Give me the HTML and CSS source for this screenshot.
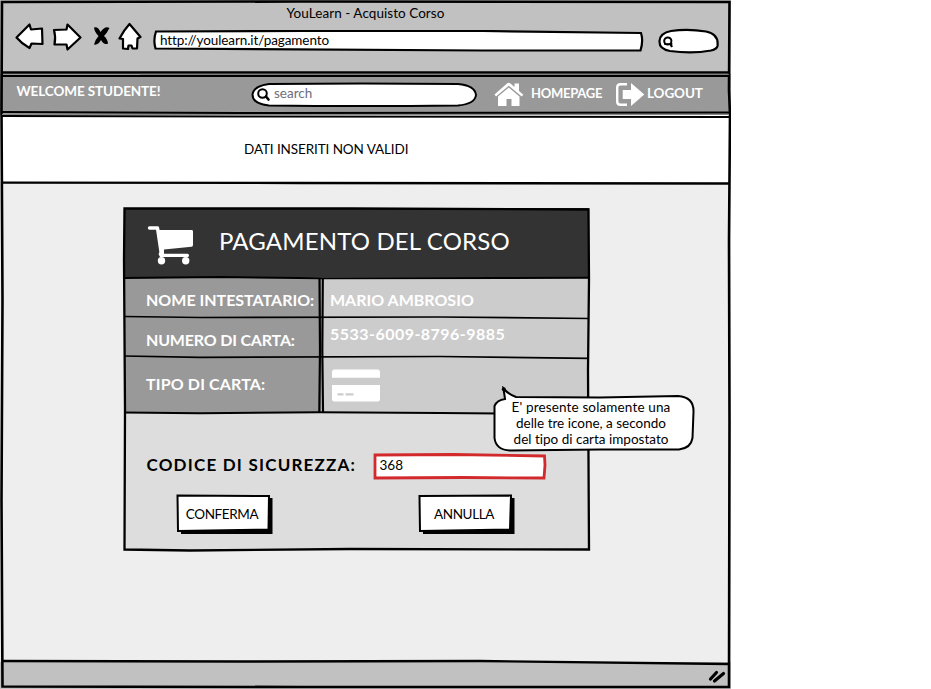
FILE: index.html
```html
<!DOCTYPE html>
<html lang="it">
<head>
<meta charset="utf-8">
<title>YouLearn - Acquisto Corso</title>
<link rel="stylesheet" href="styles.css">
</head>
<body>
<div class="window">
  <header class="chrome">
    <div class="title"><span class="t-title">YouLearn - Acquisto Corso</span></div>
    <div class="toolbar">
      <svg class="tools" width="128" height="32" viewBox="14 21 128 32">
        <g fill="#fff" stroke="#000" stroke-width="2.2" stroke-linejoin="round">
          <path d="M16.500 37.500 L29.500 24.500 L31 29.500 L42 28.500 L42.500 44 L31.500 43.500 L29.500 48 Q22 44 16.500 37.500Z"/>
          <path d="M54 30 L66.500 29.500 L67.500 24.500 L80.500 37.500 L67.500 49.500 L66.500 44.500 L54.500 44.500 Q56 37 54 30Z"/>
          <path d="M129.500 24 L140.500 37 L137.500 38.500 L137 48.500 L132.500 48.500 L131.500 45.500 L128.500 45.500 L128 49 L123 48.500 L123 39 L119.500 38.500 Q124 30 129.500 24Z"/>
        </g>
        <path d="M94 27.500 Q98 26 100.500 32 Q105 25.500 109.500 28 Q107 33 104 36 Q107.500 39 108 43.500 Q104 45.500 101 40 Q98 45.500 94 44.500 Q95 40 98.500 36 Q94.500 32 94 27.500Z"/>
      </svg>
      <div class="address">
        <svg class="shape" viewBox="0 0 491 22"><path d="M3 1.500 L150 1 L330 1 L488 3 Q490.500 11 487.500 20.500 L330 20.500 L2.500 18.500 Q0 10 3 1.500Z" fill="#fff" stroke="#000" stroke-width="2.200"/></svg>
        <span class="t-url">http://youlearn.it/pagamento</span>
      </div>
      <svg class="quick" width="62" height="26" viewBox="657 28 62 26">
        <path d="M659.500 41 Q660 33 671 31 Q688 28.500 706 31.500 Q719 34 717.500 46 Q717 49 711 50.500 Q692 54 670 51 Q659 49 659.500 41Z" fill="#fff" stroke="#000" stroke-width="2.200"/>
        <path d="M671.500 43 L671 45 L672 47" fill="none" stroke="#000" stroke-width="2.200"/><circle cx="667.800" cy="41" r="3.600" fill="none" stroke="#000" stroke-width="2"/><path d="M664 44 L672 44.200" stroke="#000" stroke-width="1.500"/>
      </svg>
    </div>
  </header>

  <nav class="nav">
    <span class="t-welcome">WELCOME STUDENTE!</span>
    <div class="search">
      <svg class="shape" viewBox="0 0 226 25"><path d="M18 2 Q110 .8 207 2 Q224 3.500 225 13 Q224 22 207 23.500 Q110 24.500 18 23.500 Q1.500 22 1.500 12.500 Q2.500 4 18 2Z" fill="#fff" stroke="#000" stroke-width="2"/><circle cx="11.500" cy="11.500" r="4.300" fill="none" stroke="#000" stroke-width="2"/><path d="M15 14.500 L17.500 17.500" stroke="#000" stroke-width="2.600" stroke-linecap="round"/></svg>
      <span class="t-search">search</span>
    </div>
    <a class="link home"><svg width="30" height="26" viewBox="494 82 30 26" fill="#fff"><path d="M494.500 94.500 L507 83.500 Q508.800 82.200 510.500 83.500 L514.500 87 L514.500 83.500 L519 83.500 L519 91 L523.300 94.800 L521.700 96.600 L508.800 85.800 L496 96.600Z"/><path d="M508.800 87.600 L519.500 96.500 L519.500 106 L511.500 106 L511.500 99 L506.500 99 L506.500 106 L498 106 L498 96.500Z"/></svg><span class="t-home">HOMEPAGE</span></a>
    <a class="link logout"><svg width="30" height="26" viewBox="615 82 30 26" fill="#fff"><path d="M627 84.200 H620.500 Q617.200 84.200 617.200 87.500 V101.500 Q617.200 104.800 620.500 104.800 H627" fill="none" stroke="#fff" stroke-width="2.400"/><path d="M622.700 90 H631 V83 L644.300 94.500 L631 106 V99 H622.700Z"/></svg><span class="t-logout">LOGOUT</span></a>
  </nav>

  <div class="alert"><span class="t-alert">DATI INSERITI NON VALIDI</span></div>

  <main class="page">
    <section class="card">
      <header class="card-head">
        <svg width="48" height="42" viewBox="147 225 48 42" fill="#fff"><path d="M149.500 228 H157.500 L161.500 255" fill="none" stroke="#fff" stroke-width="3.400" stroke-linecap="round" stroke-linejoin="round"/><path d="M157.500 230 H192 Q193 230 193 231.500 V245 Q193 246.500 191.500 246.700 L164 249.500 V253.800 H187.500 Q189 253.800 189 255.500 Q189 257 187.500 257 H160 L158.500 254 L161 250Z"/><circle cx="161.500" cy="260.800" r="3.700"/><circle cx="185.700" cy="260.800" r="3.700"/></svg>
        <span class="t-head">PAGAMENTO DEL CORSO</span>
      </header>
      <div class="rows">
        <div class="label"><span class="t-nome">NOME INTESTATARIO:</span></div>
        <div class="value"><span class="t-mario">MARIO AMBROSIO</span></div>
        <div class="label"><span class="t-numero">NUMERO DI CARTA:</span></div>
        <div class="value number"><span class="t-num">5533-6009-8796-9885</span></div>
        <div class="label"><span class="t-tipo">TIPO DI CARTA:</span></div>
        <div class="value"><svg width="50" height="34" viewBox="331 368 50 34" fill="#fff"><path d="M332 377.800 V372 Q332 369.500 334.500 369.500 H377.500 Q380 369.500 380 372 V377.800Z"/><path fill-rule="evenodd" d="M332 385 H380 V399 Q380 401.500 377.500 401.500 H334.500 Q332 401.500 332 399Z M337.500 393.300 V395.500 H343.500 V393.300Z M345.500 393.300 V395.500 H353.500 V393.300Z"/></svg></div>
      </div>
      <div class="code">
        <span class="t-codice">CODICE DI SICUREZZA:</span>
        <div class="field">
          <svg class="shape" viewBox="0 0 174 28"><path d="M2 2 L80 1.500 L171.500 3 L172 12 L171 25 L90 24.500 L2 25Z" fill="#fff" stroke="#d2292d" stroke-width="2.800"/></svg>
          <span class="t-368">368</span>
        </div>
      </div>
      <div class="actions">
        <div class="button"><svg class="shape" viewBox="0 0 97 40"><path d="M5 4 H96.500 V40 H5Z"/><path d="M1.500 1.500 L93 2 L92.500 35.500 L2 37Z" fill="#fff" stroke="#000" stroke-width="2"/></svg><span class="t-conferma">CONFERMA</span></div>
        <div class="button"><svg class="shape" viewBox="0 0 97 40"><path d="M5 4 H96.500 V40 H5Z"/><path d="M1.500 2 L93 1.500 L92 35.500 L2 37Z" fill="#fff" stroke="#000" stroke-width="2"/></svg><span class="t-annulla">ANNULLA</span></div>
      </div>
      <svg class="overlay" viewBox="122 206 470 347" fill="none" stroke="#000" stroke-width="2">
        <path d="M124.500 208.500 L350 208.500 L588.500 209.500 L589 280 L588 370 L589 549.500 L350 549 L190 550.500 L124.500 549.500 L125 410 L124 260Z" stroke-width="2.300"/>
        <path d="M124 278 L220 277 L320 278.300 L588 277.800"/>
        <path d="M319.500 278 L320 350 L319.300 413" stroke-width="2.200"/><path d="M322.800 278 L322.300 350 L323 412" stroke-width="2.200"/>
        <path d="M124 316.500 L200 317.500 L440 317 L589 318.500" stroke-width="1.700"/><path d="M124 356 L200 357.300 L440 356.500 L589 358.300" stroke-width="1.700"/>
        <path d="M124 412.500 L200 413.300 L320 412.300 L440 413 L500 413.500"/>
      </svg>
      <aside class="bubble">
        <svg class="shape" viewBox="492 386 204 66"><path d="M505 399 L503.500 388.500 Q508 394 516 397 L600 397.500 L678 396 Q694 397 693.500 412 L692.500 438 Q691 448 679 449.500 L600 449.500 L510 450.500 Q496 450 494.500 438 L494.500 406 Q497 400 505 399Z" fill="#fff" stroke="#000" stroke-width="2"/><circle cx="503.800" cy="389.300" r="2"/></svg>
        <p><span class="t-b1">E' presente solamente una</span><br><span class="t-b2">delle tre icone, a secondo</span><br><span class="t-b3">del tipo di carta impostato</span></p>
      </aside>
    </section>
  </main>

  <footer class="status"><svg width="20" height="16" viewBox="707 668 20 16" stroke="#000" stroke-width="3.200" stroke-linecap="round"><path d="M710.500 679 L716.500 672.500"/><path d="M714.500 681 L723.500 673.500"/></svg></footer>

  <svg class="overlay frame" viewBox="0 0 731 689" fill="none" stroke="#000">
    <path d="M2 2 L300 1.500 L729.500 2 L729 90 L730 115 L729 240 L729.500 420 L729 687 L300 687 L2.500 686.500 L1.500 500 L2.500 300 L1.500 110Z" stroke-width="2.600"/>
    <path d="M2 72.500 H729" stroke-width="2.600"/><path d="M2 76 H729" stroke-width="2.200"/><path d="M140 74.300 H729" stroke="#777" stroke-width="1"/>
    <path d="M2 112 L240 113 L729 112.500" stroke-width="2"/><path d="M2 116 L240 116.500 L729 117" stroke-width="2"/><path d="M2 114.500 H729" stroke="#888" stroke-width="1"/>
    <path d="M2 182.700 L300 183 L729 183.500" stroke-width="2.300"/>
    <path d="M2 661 L240 661.500 L480 661 L729 664" stroke-width="2.400"/>
  </svg>
</div>
</body>
</html>
```
FILE: styles.css
```css
* { box-sizing: border-box; }
body { margin: 0; background: #fff; font: 13.5px/16px Lato, "Liberation Sans", sans-serif; font-variant-ligatures: none; color: #000; }
span { white-space: nowrap; display: inline-block; }
.window { position: relative; width: 731px; height: 689px; display: flex; flex-direction: column; background: #eee; }
.overlay { position: absolute; pointer-events: none; }
.frame { inset: 0; width: 731px; height: 689px; }
.shape { position: absolute; inset: 0; width: 100%; height: 100%; }
.shape + span, .shape + p { position: relative; }
.chrome { height: 74px; background: #c1c1c1; padding-top: 5px; }
.title { display: flex; justify-content: center; height: 16px; }
.toolbar { display: flex; align-items: flex-start; padding-left: 14px; }
.tools { flex: none; }
.address { position: relative; width: 491px; height: 22px; margin: 9px 13px 0 11px; padding: 2px 0 0 7px; }
.quick { margin-top: 7px; flex: none; }
.nav { height: 41px; background: #999; color: #fff; display: flex; align-items: flex-start; padding-left: 16.5px; font-weight: 700; }
.nav > span { width: 234.5px; margin-top: 9px; }
.search { position: relative; width: 226px; height: 25px; margin-top: 8px; padding: 3px 0 0 23px; color: #6e6e7a; font-weight: 400; }
.link { display: flex; margin-top: 8px; }
.link span { margin-top: 3px; }
.home { margin-left: 17px; gap: 7px; width: 121px; }
.logout { gap: 2px; }
.alert { height: 68px; background: #fff; padding: 26px 0 0 244px; }
.page { flex: 1; padding: 25px 0 0 124px; }
.card { position: relative; width: 465px; height: 342px; background: #ddd; }
.card .overlay { left: -2px; top: -2px; width: 470px; height: 347px; }
.card-head { height: 69px; background: #333; color: #fff; display: flex; padding: 17px 0 0 23px; gap: 24px; font-size: 24px; line-height: 32px; }
.rows { display: grid; grid-template-columns: 197px 268px; grid-template-rows: 40px 40px 56px; font-size: 16px; font-weight: 700; color: #fff; }
.label { background: #999; display: flex; align-items: center; padding: 5px 0 0 22px; }
.value { background: #ccc; display: flex; align-items: center; padding: 5px 0 0 9px; }
.number { align-items: flex-start; padding-top: 9px; }
.label:nth-child(5) { padding: 0 0 2px 22px; }
.value:nth-child(6) { padding: 0 0 0 10px; }
.code { display: flex; align-items: center; padding: 40px 0 0 22.5px; height: 67px; font-size: 17px; font-weight: 700; }
.code > span { width: 226px; padding-bottom: 3px; }
.field { position: relative; width: 174px; height: 28px; padding: 4px 0 0 7px; font-size: 13.5px; font-weight: 400; }
.actions { display: flex; gap: 145px; padding: 14px 0 0 51.5px; }
.button { position: relative; width: 97px; height: 40px; display: flex; justify-content: center; padding: 12px 4px 0 0; }
.bubble { position: absolute; left: 368px; top: 178px; width: 204px; height: 66px; text-align: center; z-index: 2; }
.bubble p { margin: 0; padding: 13px 6px 0 0; }
.status { height: 27px; background: #c1c1c1; display: flex; justify-content: flex-end; padding: 6px 4px 0 0; }

.t-url { letter-spacing: -.1px; }
.t-welcome { letter-spacing: -.1px; }
.t-home { font-size: 13px; letter-spacing: -.28px; }
.t-logout { letter-spacing: -.1px; }
.t-alert { letter-spacing: -.1px; }
.t-head { letter-spacing: .15px; }
.t-numero { letter-spacing: -.18px; }
.t-num { letter-spacing: .47px; }
.t-tipo { letter-spacing: .15px; }
.t-codice { letter-spacing: 1.2px; }
.t-conferma, .t-annulla { letter-spacing: -.4px; }
.t-b1 { letter-spacing: .14px; }
.t-title { letter-spacing: .05px; }
```
